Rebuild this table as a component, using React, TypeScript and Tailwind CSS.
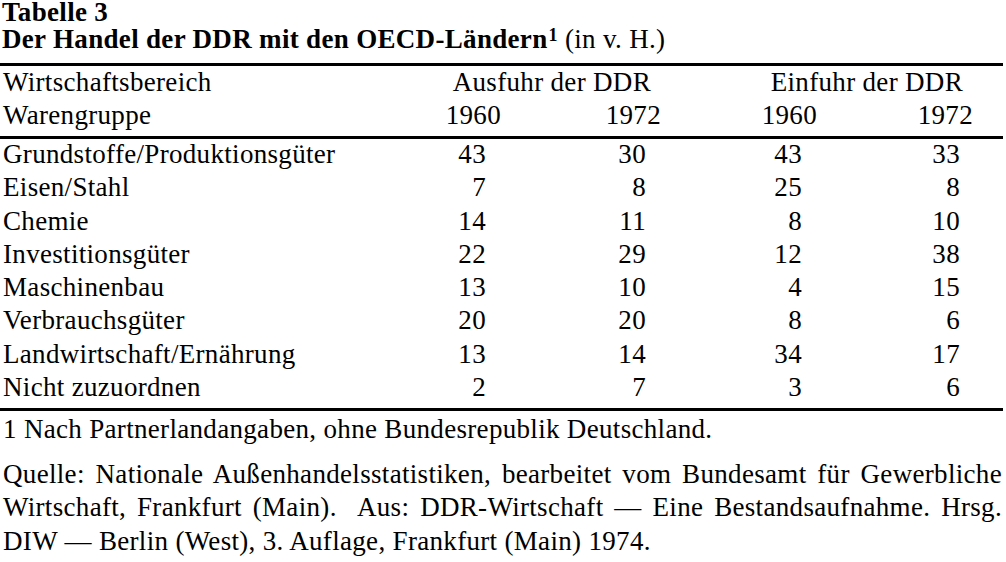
const rows: [string, number, number, number, number][] = [
  ["Grundstoffe/Produktionsgüter", 43, 30, 43, 33],
  ["Eisen/Stahl", 7, 8, 25, 8],
  ["Chemie", 14, 11, 8, 10],
  ["Investitionsgüter", 22, 29, 12, 38],
  ["Maschinenbau", 13, 10, 4, 15],
  ["Verbrauchsgüter", 20, 20, 8, 6],
  ["Landwirtschaft/Ernährung", 13, 14, 34, 17],
  ["Nicht zuzuordnen", 2, 7, 3, 6],
];

const grid = "grid grid-cols-[1fr_100px_160px_156px_156px] pr-[33px]";

function Rule({ className = "" }: { className?: string }) {
  return <div className={`h-[2.5px] bg-black mr-[3px] ${className}`} />;
}

export default function App() {
  return (
    <div className="w-[1006px] h-[562px] overflow-hidden bg-white text-black flex flex-col font-['Liberation_Serif',serif] text-[27px] tracking-[0.32px]">
      {/* Titel */}
      <div className="-mt-[1px] h-[64px] pl-[2px] leading-[27px]">
        <div className="font-bold">Tabelle 3</div>
        <div>
          <span className="font-bold">
            Der Handel der DDR mit den OECD-Ländern
            <span className="text-[18px] leading-none align-[7px] ml-[1px]">1</span>
          </span>{" "}
          (in v. H.)
        </div>
      </div>

      <Rule />

      {/* Kopfzeilen */}
      <div className={`${grid} leading-[33px]`}>
        <div className="pl-[3px]">Wirtschaftsbereich</div>
        <div className="col-span-2 text-right pr-[10px]">Ausfuhr der DDR</div>
        <div className="col-span-2 text-right pr-[10px]">Einfuhr der DDR</div>
        <div className="pl-[3px]">Warengruppe</div>
        <div className="text-right">1960</div>
        <div className="text-right">1972</div>
        <div className="text-right">1960</div>
        <div className="text-right">1972</div>
      </div>

      <Rule className="mt-[4.5px]" />

      {/* Daten */}
      <div className={`${grid} -mt-[0.5px] leading-[33.3px]`}>
        {rows.map(([label, a, b, c, d]) => (
          <div key={label} className="contents">
            <div className="pl-[3px]">{label}</div>
            <div className="text-right pr-[15px]">{a}</div>
            <div className="text-right pr-[15px]">{b}</div>
            <div className="text-right pr-[15px]">{c}</div>
            <div className="text-right pr-[13px]">{d}</div>
          </div>
        ))}
      </div>

      <Rule className="mt-[3.9px]" />

      <div className="mt-[2px] pl-[3px] leading-[33px]">
        1 Nach Partnerlandangaben, ohne Bundesrepublik Deutschland.
      </div>

      {/* Quelle */}
      <div className="mt-[12px] pl-[3px] pr-[4px] leading-[33.5px]">
        <div className="text-justify [text-align-last:justify]">
          Quelle: Nationale Außenhandelsstatistiken, bearbeitet vom Bundesamt für Gewerbliche
        </div>
        <div className="text-justify [text-align-last:justify]">
          Wirtschaft, Frankfurt (Main).{"\u00a0 "}Aus: DDR-Wirtschaft — Eine Bestandsaufnahme. Hrsg.
        </div>
        <div>DIW — Berlin (West), 3. Auflage, Frankfurt (Main) 1974.</div>
      </div>
    </div>
  );
}
